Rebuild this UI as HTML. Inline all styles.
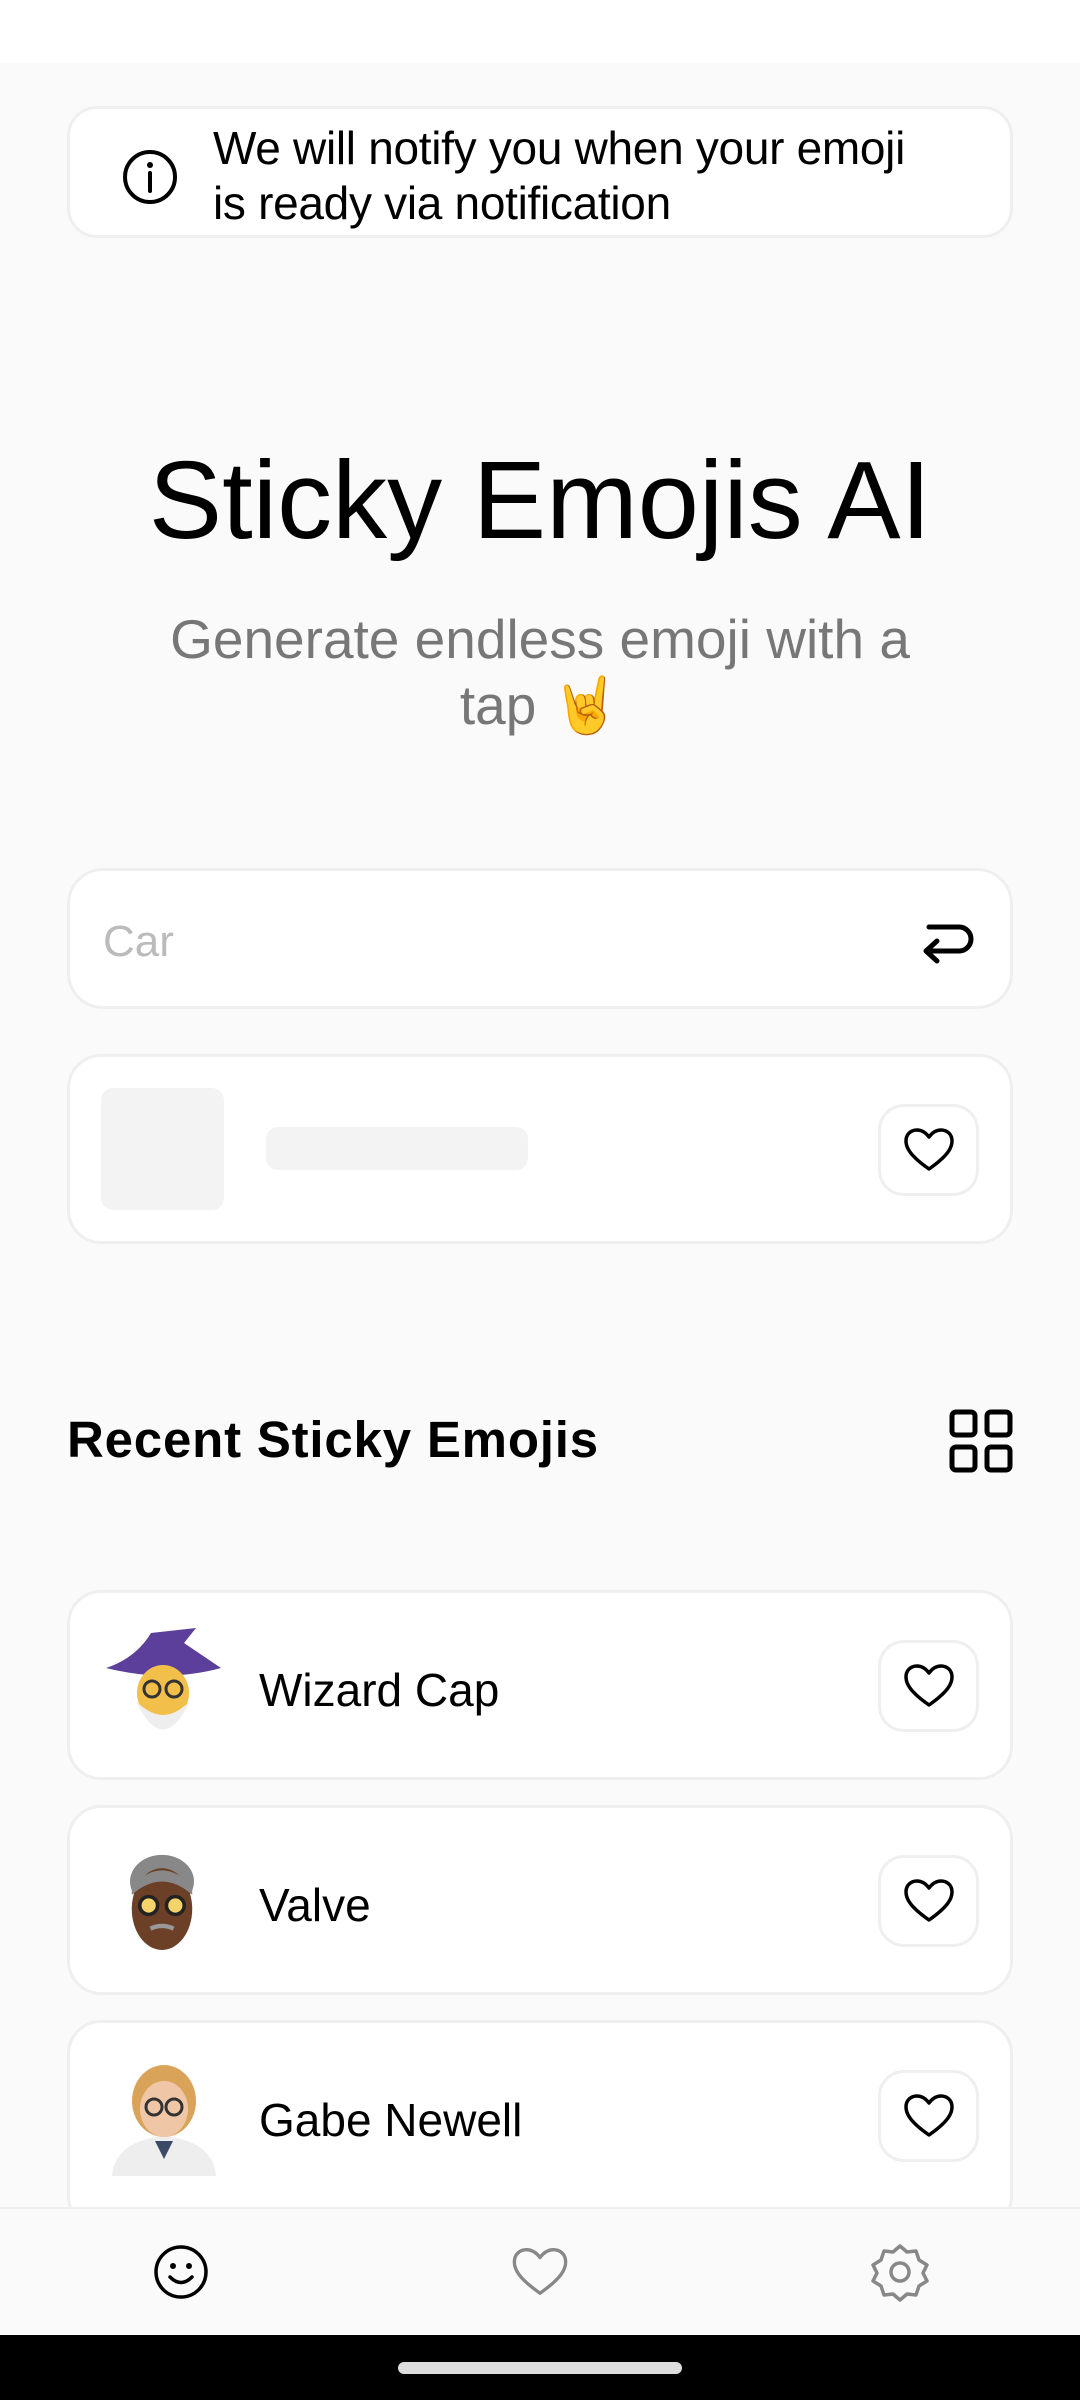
<!DOCTYPE html>
<html><head><meta charset="utf-8"><style>
*{box-sizing:border-box;margin:0;padding:0}
body{width:1080px;height:2400px;background:#fafafa;font-family:"Liberation Sans",sans-serif;position:relative;overflow:hidden;color:#000}
.abs{position:absolute}
.card{position:absolute;left:67px;width:946px;background:#fff;border:3px solid #efefef;border-radius:34px}
.hb{position:absolute;left:878px;width:101px;height:92px;border:3px solid #efefef;border-radius:26px;background:#fff;display:flex;align-items:center;justify-content:center}
.name{position:absolute;left:256px;font-size:46px}
</style></head><body>
<svg width="0" height="0" style="position:absolute"><defs><path id="h" d="M26 42C6 28 3 20 3 14C3 7 8 3 14 3C19 3 23 6 26 10C29 6 33 3 38 3C44 3 49 7 49 14C49 20 46 28 26 42z"/></defs></svg>
<div class="abs" style="left:0;top:0;width:1080px;height:63px;background:#fff"></div>
<div class="card" style="top:106px;height:132px;border-radius:30px">
 <svg class="abs" style="left:50px;top:38px" width="60" height="60" viewBox="0 0 60 60"><circle cx="30" cy="30" r="25" fill="none" stroke="#000" stroke-width="4"/><circle cx="30" cy="18" r="3" fill="#000"/><path d="M30 26v18" stroke="#000" stroke-width="4" stroke-linecap="round"/></svg>
 <div class="abs" style="left:143px;top:12px;font-size:46px;line-height:55px;letter-spacing:-0.3px">We will notify you when your emoji<br>is ready via notification</div>
</div>
<div class="abs" style="left:0;width:1080px;top:436px;text-align:center;font-size:110px;line-height:130px">Sticky Emojis AI</div>
<div class="abs" style="left:0;width:1080px;top:606px;text-align:center;font-size:55px;line-height:66px;color:#777">Generate endless emoji with a<br>tap 🤘</div>
<div class="card" style="top:868px;height:141px;border-radius:36px">
 <div class="abs" style="left:33px;top:46px;font-size:44px;color:#bbb">Car</div>
 <svg class="abs" style="left:845px;top:42px" width="62" height="52" viewBox="0 0 62 52"><path d="M12 38H44a12 12 0 0 0 0-24H14" fill="none" stroke="#000" stroke-width="5" stroke-linecap="round"/><path d="M22 28l-11 10 11 10" fill="none" stroke="#000" stroke-width="5" stroke-linecap="round" stroke-linejoin="round"/></svg>
</div>
<div class="card" style="top:1054px;height:190px">
 <div class="abs" style="left:31px;top:31px;width:123px;height:122px;background:#f3f3f3;border-radius:12px"></div>
 <div class="abs" style="left:196px;top:70px;width:262px;height:43px;background:#f3f3f3;border-radius:12px"></div>
 <div class="hb" style="left:808px;top:47px"><svg width="52" height="46" viewBox="0 0 52 46"><use href="#h" fill="none" stroke="#000" stroke-width="3.5" stroke-linejoin="round"/></svg></div>
</div>
<div class="abs" style="left:67px;top:1410px;font-size:51px;font-weight:bold;letter-spacing:0.8px">Recent Sticky Emojis</div>
<svg class="abs" style="left:948px;top:1408px" width="66" height="66" viewBox="0 0 66 66" fill="none" stroke="#000" stroke-width="5"><rect x="4" y="4" width="23" height="23" rx="4"/><rect x="39" y="4" width="23" height="23" rx="4"/><rect x="4" y="39" width="23" height="23" rx="4"/><rect x="39" y="39" width="23" height="23" rx="4"/></svg>

<div class="card" style="top:1590px;height:190px">
 <svg class="abs" style="left:36px;top:30px" width="115" height="125" viewBox="0 0 115 125"><path d="M0 45 Q30 35 45 10 L90 5 L78 20 L115 45 Q60 60 0 45z" fill="#5b3f9a"/><ellipse cx="57" cy="70" rx="26" ry="28" fill="#f2c04a"/><path d="M30 78 Q57 135 84 78 Q70 92 57 92 Q44 92 30 78z" fill="#eee"/><circle cx="46" cy="66" r="8" fill="none" stroke="#333" stroke-width="3"/><circle cx="68" cy="66" r="8" fill="none" stroke="#333" stroke-width="3"/></svg>
 <div class="name" style="left:189px;top:70px">Wizard Cap</div>
 <div class="hb" style="left:808px;top:47px"><svg width="52" height="46" viewBox="0 0 52 46"><use href="#h" fill="none" stroke="#000" stroke-width="3.5" stroke-linejoin="round"/></svg></div>
</div>
<div class="card" style="top:1805px;height:190px">
 <svg class="abs" style="left:52px;top:36px" width="80" height="115" viewBox="0 0 90 115"><ellipse cx="45" cy="35" rx="36" ry="30" fill="#888"/><ellipse cx="45" cy="66" rx="34" ry="46" fill="#6b4026"/><path d="M11 50 Q45 20 79 50 L79 40 Q45 5 11 40z" fill="#888"/><circle cx="30" cy="62" r="10" fill="#f5d36b" stroke="#222" stroke-width="4"/><circle cx="60" cy="62" r="10" fill="#f5d36b" stroke="#222" stroke-width="4"/><path d="M32 88 Q45 82 58 88" stroke="#999" stroke-width="5" fill="none"/></svg>
 <div class="name" style="left:189px;top:70px">Valve</div>
 <div class="hb" style="left:808px;top:47px"><svg width="52" height="46" viewBox="0 0 52 46"><use href="#h" fill="none" stroke="#000" stroke-width="3.5" stroke-linejoin="round"/></svg></div>
</div>
<div class="card" style="top:2020px;height:210px">
 <svg class="abs" style="left:40px;top:38px" width="108" height="115" viewBox="0 0 108 115"><path d="M2 115 Q5 80 54 75 Q103 80 106 115z" fill="#eee"/><path d="M45 80 L54 98 L63 80z" fill="#3b4a66"/><ellipse cx="54" cy="40" rx="32" ry="36" fill="#d9a35a"/><ellipse cx="54" cy="48" rx="24" ry="28" fill="#f0c7a6"/><circle cx="44" cy="46" r="8" fill="none" stroke="#333" stroke-width="3"/><circle cx="64" cy="46" r="8" fill="none" stroke="#333" stroke-width="3"/></svg>
 <div class="name" style="left:189px;top:70px">Gabe Newell</div>
 <div class="hb" style="left:808px;top:47px"><svg width="52" height="46" viewBox="0 0 52 46"><use href="#h" fill="none" stroke="#000" stroke-width="3.5" stroke-linejoin="round"/></svg></div>
</div>

<div class="abs" style="left:0;top:2207px;width:1080px;height:128px;background:#fafafa;border-top:2px solid #eee"></div>
<svg class="abs" style="left:153px;top:2244px" width="56" height="56" viewBox="0 0 56 56"><circle cx="28" cy="28" r="25" fill="none" stroke="#000" stroke-width="3.5"/><circle cx="20" cy="22" r="3" fill="#000"/><circle cx="36" cy="22" r="3" fill="#000"/><path d="M17 33q11 11 22 0" fill="none" stroke="#000" stroke-width="3.5" stroke-linecap="round"/></svg>
<svg class="abs" style="left:511px;top:2246px" width="58" height="52" viewBox="0 0 52 46"><use href="#h" fill="none" stroke="#888" stroke-width="3" stroke-linejoin="round"/></svg>
<svg class="abs" style="left:870px;top:2242px" width="60" height="60" viewBox="0 0 60 60"><path d="M30 4l7 6 9-1 3 9 8 5-4 8 4 8-8 5-3 9-9-1-7 6-7-6-9 1-3-9-8-5 4-8-4-8 8-5 3-9 9 1z" fill="none" stroke="#888" stroke-width="3.5" stroke-linejoin="round"/><circle cx="30" cy="30" r="9" fill="none" stroke="#888" stroke-width="3.5"/></svg>
<div class="abs" style="left:0;top:2335px;width:1080px;height:65px;background:#000"></div>
<div class="abs" style="left:398px;top:2362px;width:284px;height:12px;border-radius:6px;background:#ddd"></div>
</body></html>
